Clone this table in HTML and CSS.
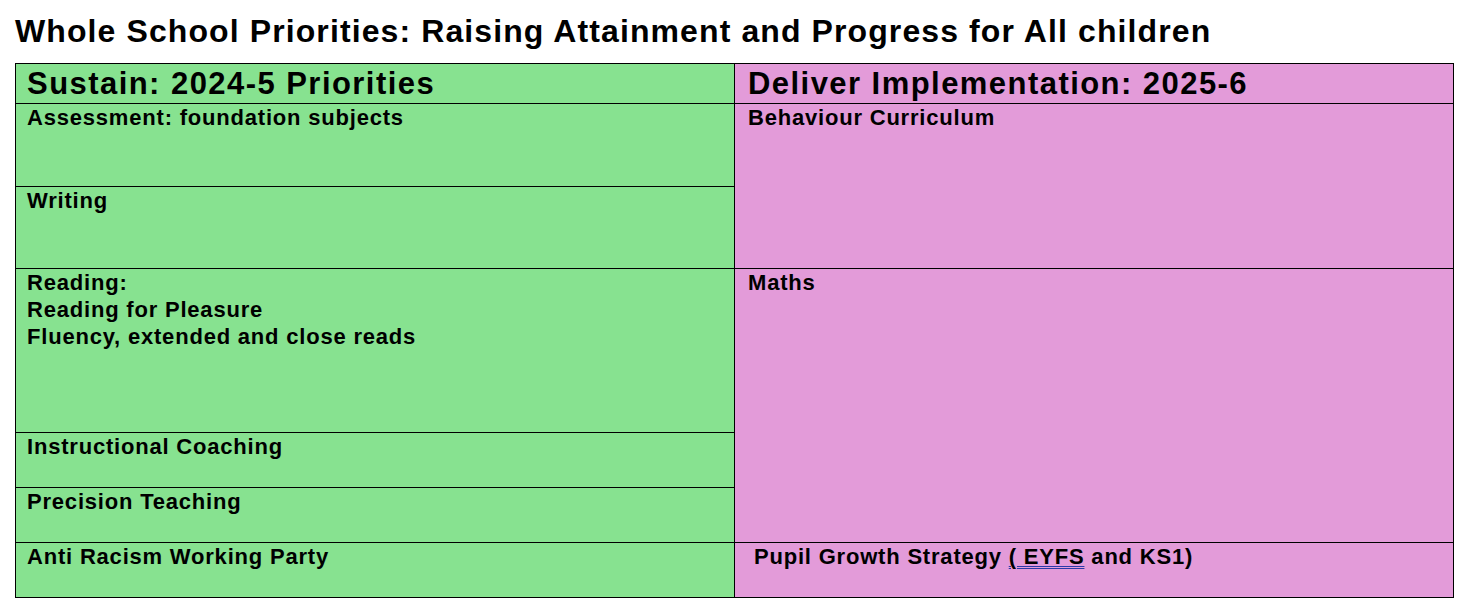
FILE: index.html
```html
<!DOCTYPE html>
<html>
<head>
<meta charset="utf-8">
<link rel="stylesheet" href="styles.css">
</head>
<body>
<h1 class="title">Whole School Priorities: Raising Attainment and Progress for All children</h1>
<div class="grid">
  <div class="cell green head c1 r1">Sustain: 2024-5 Priorities</div>
  <div class="cell pink head c2 r1">Deliver Implementation: 2025-6</div>
  <div class="cell green c1 r2">Assessment: foundation subjects</div>
  <div class="cell green c1 r3">Writing</div>
  <div class="cell pink c2 r23">Behaviour Curriculum</div>
  <div class="cell green c1 r4">Reading:<br>Reading for Pleasure<br>Fluency, extended and close reads</div>
  <div class="cell pink c2 r456">Maths</div>
  <div class="cell green c1 r5">Instructional Coaching</div>
  <div class="cell green c1 r6">Precision Teaching</div>
  <div class="cell green c1 r7">Anti Racism Working Party</div>
  <div class="cell pink c2 r7 pupil">Pupil Growth Strategy <span class="spell">( EYFS</span> and KS1)</div>
</div>
</body>
</html>
```
FILE: styles.css
```css
html, body {
  margin: 0;
  padding: 0;
  background: #ffffff;
}
body {
  font-family: "Liberation Sans", Arial, sans-serif;
  color: #000;
  padding: 0 0 0 15px;
}
.title {
  margin: 0;
  padding-top: 13px;
  height: 50px;
  box-sizing: border-box;
  font-size: 32px;
  line-height: 37px;
  letter-spacing: 1.1px;
  font-weight: bold;
  white-space: nowrap;
}
.grid {
  display: grid;
  width: 1439px;
  box-sizing: border-box;
  grid-template-columns: 718px 718px;
  grid-template-rows: 39px 82px 81px 163px 54px 54px 54px;
  gap: 1px;
  padding: 1px;
  background: #000;
  margin-top: 13px;
}
.cell {
  font-weight: bold;
  font-size: 22px;
  line-height: 27px;
  letter-spacing: 0.8px;
  padding: 0 0 0 11px;
  white-space: nowrap;
}
.green { background: #87e290; }
.pink { background: #e39bd9; padding-left: 13px; }
.head {
  font-size: 31px;
  line-height: 40px;
  letter-spacing: 1.45px;
  padding-top: 0;
}
.c1 { grid-column: 1; }
.c2 { grid-column: 2; }
.r1 { grid-row: 1; }
.r2 { grid-row: 2; }
.r3 { grid-row: 3; }
.r23 { grid-row: 2 / 4; }
.r4 { grid-row: 4; }
.r456 { grid-row: 4 / 7; }
.r5 { grid-row: 5; }
.r6 { grid-row: 6; }
.r7 { grid-row: 7; }
.pupil { padding-left: 19px; }
.spell {
  text-decoration: underline double #2b3aa8;
  text-decoration-thickness: 1px;
  text-underline-offset: 2px;
}
```
